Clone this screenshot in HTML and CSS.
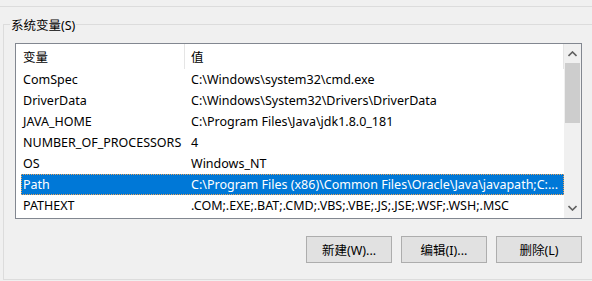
FILE: index.html
```html
<!DOCTYPE html>
<html lang="zh-CN">
<head>
  <meta charset="UTF-8">
  <title>系统变量</title>
  <link rel="stylesheet" href="styles.css">
</head>
<body>

  <div class="grupo-arriba"></div>

  <fieldset class="grupo">
    <legend>系统变量(S)</legend>

    <div class="lista">
      <div class="lista-cuerpo">
        <div class="cabecera">
          <div class="col-nombre">变量</div>
          <div class="col-valor">值</div>
        </div>
        <div class="fila"><div class="col-nombre">ComSpec</div><div class="col-valor">C:\Windows\system32\cmd.exe</div></div>
        <div class="fila"><div class="col-nombre">DriverData</div><div class="col-valor">C:\Windows\System32\Drivers\DriverData</div></div>
        <div class="fila"><div class="col-nombre">JAVA_HOME</div><div class="col-valor">C:\Program Files\Java\jdk1.8.0_181</div></div>
        <div class="fila"><div class="col-nombre">NUMBER_OF_PROCESSORS</div><div class="col-valor">4</div></div>
        <div class="fila"><div class="col-nombre">OS</div><div class="col-valor">Windows_NT</div></div>
        <div class="fila activa"><div class="col-nombre">Path</div><div class="col-valor">C:\Program Files (x86)\Common Files\Oracle\Java\javapath;C:...</div></div>
        <div class="fila"><div class="col-nombre">PATHEXT</div><div class="col-valor">.COM;.EXE;.BAT;.CMD;.VBS;.VBE;.JS;.JSE;.WSF;.WSH;.MSC</div></div>
      </div>
      <div class="scroll">
        <svg class="flecha" width="9" height="6" viewBox="0 0 9 6"><path d="M0.5 5 L4.5 1 L8.5 5" fill="none" stroke="#606060" stroke-width="1.6"/></svg>
        <div class="pulgar"></div>
        <div class="hueco"></div>
        <svg class="flecha" width="9" height="6" viewBox="0 0 9 6"><path d="M0.5 1 L4.5 5 L8.5 1" fill="none" stroke="#606060" stroke-width="1.6"/></svg>
      </div>
    </div>

    <div class="botones">
      <button>新建(W)...</button>
      <button>编辑(I)...</button>
      <button>删除(L)</button>
    </div>
  </fieldset>

</body>
</html>
```

FILE: styles.css
```css
* { box-sizing: border-box; }

body {
  margin: 0;
  width: 592px;
  height: 281px;
  overflow: hidden;
  font-family: 'Noto Sans', 'Noto Sans CJK SC', sans-serif;
  font-size: 12.5px;
  color: #000;
  background: #f0f0f0;
}

.grupo-arriba {
  height: 7px;
  border-bottom: 1px solid #dcdcdc;
}

.grupo {
  box-sizing: content-box;
  width: 567px;
  min-width: 0;
  min-inline-size: 0;
  margin: 6px 0 0 3px;
  padding: 8px 12px 16px 11px;
  border: 1px solid #dcdcdc;
}

.grupo legend {
  margin-left: -5px;
  padding: 4px 1px 0;
  line-height: 18px;
}

.lista {
  display: flex;
  height: 176px;
  background: #fff;
  border: 1px solid #828790;
}

.lista-cuerpo {
  flex: 1;
  min-width: 0;
  overflow: hidden;
}

.cabecera {
  display: flex;
  height: 25px;
}

.cabecera .col-nombre {
  width: 169px;
  padding-left: 7px;
  display: flex;
  align-items: center;
  border-right: 1px solid #e5e5e5;
}

.cabecera .col-valor {
  flex: 1;
  padding-left: 6px;
  display: flex;
  align-items: center;
  border-right: 1px solid #e5e5e5;
}

.fila {
  display: flex;
  height: 21px;
  margin-left: 5px;
  align-items: center;
  white-space: nowrap;
}

.fila .col-nombre {
  width: 164px;
  padding-left: 2px;
}

.fila .col-valor {
  flex: 1;
  min-width: 0;
  padding-left: 6px;
  overflow: hidden;
}

.fila.activa {
  background: #0078d7;
  color: #fff;
  outline: 1px dotted #e9a35a;
  outline-offset: -1px;
}

.scroll {
  width: 17px;
  flex-shrink: 0;
  display: flex;
  flex-direction: column;
  align-items: center;
  background: #f0f0f0;
}

.flecha {
  margin: 7px 0;
}

.pulgar {
  width: 15px;
  height: 60px;
  margin-top: -1px;
  background: #cdcdcd;
}

.hueco {
  flex: 1;
}

.botones {
  display: flex;
  justify-content: flex-end;
  gap: 9px;
  margin-top: 17px;
}

.botones button {
  width: 86px;
  height: 27px;
  font-family: inherit;
  font-size: 12.5px;
  color: #000;
  background: #e1e1e1;
  border: 1px solid #adadad;
  padding: 0;
}
```
